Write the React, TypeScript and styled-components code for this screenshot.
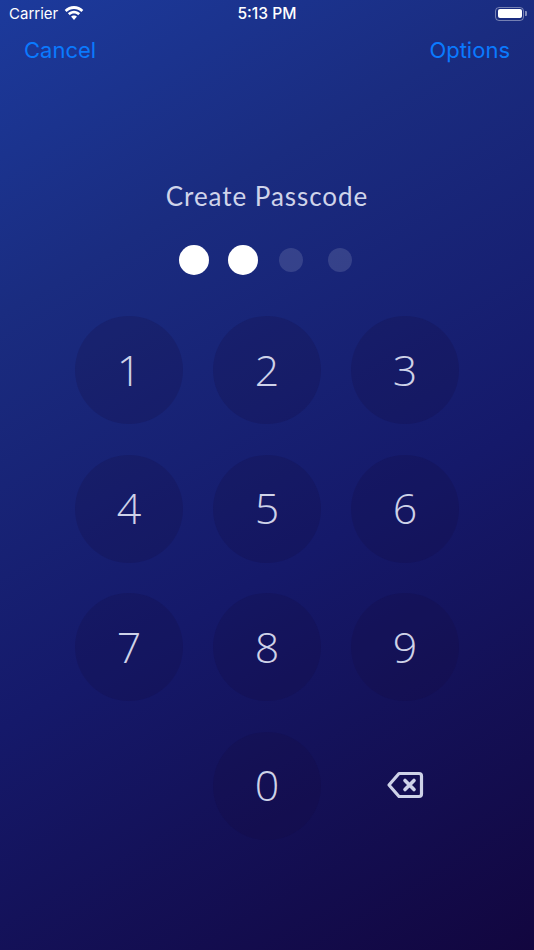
import styled, { createGlobalStyle } from "styled-components";

const GlobalStyle = createGlobalStyle`
  html, body {
    margin: 0;
    padding: 0;
    background: #12063f;
  }
`;

const KEYS = ["1", "2", "3", "4", "5", "6", "7", "8", "9"];
const DOTS = [true, true, false, false];

const Screen = styled.div`
  width: 534px;
  height: 950px;
  overflow: hidden;
  display: flex;
  flex-direction: column;
  align-items: center;
  background: linear-gradient(150deg, #1c3a9c 0%, #1a2c80 25%, #15196a 58%, #12063f 100%);
`;

const StatusBar = styled.div`
  width: 100%;
  box-sizing: border-box;
  height: 27px;
  padding: 0 7px 0 9px;
  display: grid;
  grid-template-columns: 1fr auto 1fr;
  align-items: center;
  color: #fff;
  font-family: "Inter", "Liberation Sans", sans-serif;
  font-size: 15px;
`;

const Carrier = styled.div`
  display: flex;
  align-items: center;
  gap: 6px;
`;

const Clock = styled.span`
  margin-left: -2px;
  font-size: 15.6px;
  font-weight: 500;
`;

const Battery = styled.div`
  justify-self: end;
  display: flex;
  align-items: center;
  gap: 1px;
`;

const BatteryBody = styled.div`
  width: 29px;
  height: 14px;
  box-sizing: border-box;
  border: 1px solid rgba(255, 255, 255, 0.4);
  border-radius: 4px;
  padding: 1.5px;
  display: flex;

  &::after {
    content: "";
    flex: 1;
    background: #fff;
    border-radius: 2px;
  }
`;

const BatteryCap = styled.div`
  width: 2px;
  height: 5px;
  background: rgba(255, 255, 255, 0.45);
  border-radius: 0 1px 1px 0;
`;

const NavBar = styled.div`
  width: 100%;
  box-sizing: border-box;
  padding: 6px 24px 0;
  display: flex;
  justify-content: space-between;
`;

const NavButton = styled.span`
  color: #0a7aff;
  font-family: "Inter", "Liberation Sans", sans-serif;
  font-size: 22px;
  line-height: 34px;
`;

const Title = styled.h1`
  margin: 114px 0 0;
  color: #cfd4ea;
  font-family: "Lato", "Open Sans", sans-serif;
  font-size: 26px;
  font-weight: 400;
  letter-spacing: 0.95px;
  line-height: 30px;
`;

const Dots = styled.div`
  margin-top: 34px;
  height: 30px;
  display: flex;
  align-items: center;
`;

const DotSlot = styled.div`
  width: 48.67px;
  display: flex;
  justify-content: center;
`;

const Dot = styled.div<{ $filled: boolean }>`
  width: ${(p) => (p.$filled ? "30px" : "24px")};
  height: ${(p) => (p.$filled ? "30px" : "24px")};
  border-radius: 50%;
  background: ${(p) => (p.$filled ? "#fff" : "rgba(255, 255, 255, 0.13)")};
`;

const Keypad = styled.div`
  margin-top: 41px;
  display: grid;
  grid-template-columns: repeat(3, 108px);
  grid-auto-rows: 108px;
  column-gap: 30px;
  row-gap: 30.5px;
`;

const Key = styled.div`
  width: 108px;
  height: 108px;
  box-sizing: border-box;
  padding-bottom: 2px;
  border-radius: 50%;
  display: flex;
  align-items: center;
  justify-content: center;
  background: rgba(18, 12, 60, 0.2);
  color: #ced2e8;
  font-family: "Open Sans", sans-serif;
  font-size: 43px;
  font-weight: 300;
`;

const EmptyKey = styled.div``;

const DeleteKey = styled.div`
  display: flex;
  align-items: center;
  justify-content: center;
`;

const App = () => {
  return (
    <Screen>
      <GlobalStyle />
      <StatusBar>
        <Carrier>
          <span>Carrier</span>
          <svg width="20" height="15" viewBox="0 0 20 15" fill="#fff">
            <path d="M10 3.100c2.800 0 5.400 1.100 7.400 3l1.900-2C16.800 1.500 13.500 0 10 0S3.200 1.500.7 4.100l1.900 2c2-1.900 4.600-3 7.400-3z" />
            <path d="M10 7.600c1.600 0 3.100.6 4.200 1.700l1.900-2C14.500 5.700 12.300 4.800 10 4.800s-4.500.9-6.100 2.500l1.900 2C6.900 8.200 8.400 7.600 10 7.600z" />
            <path d="M10 9.400c-1.200 0-2.300.5-3 1.200l3 3.400 3-3.400c-.7-.7-1.800-1.200-3-1.200z" />
          </svg>
        </Carrier>
        <Clock>5:13 PM</Clock>
        <Battery>
          <BatteryBody />
          <BatteryCap />
        </Battery>
      </StatusBar>
      <NavBar>
        <NavButton>Cancel</NavButton>
        <NavButton>Options</NavButton>
      </NavBar>
      <Title>Create Passcode</Title>
      <Dots>
        {DOTS.map((filled, i) => (
          <DotSlot key={i}>
            <Dot $filled={filled} />
          </DotSlot>
        ))}
      </Dots>
      <Keypad>
        {KEYS.map((k) => (
          <Key key={k}>{k}</Key>
        ))}
        <EmptyKey />
        <Key>0</Key>
        <DeleteKey>
          <svg width="38" height="30" viewBox="0 0 38 30" fill="none" stroke="#ced2e8" strokeWidth="3.2" strokeLinejoin="round" strokeLinecap="round">
            <path d="M13 2.500h20a2.500 2.500 0 0 1 2.500 2.500v18a2.500 2.500 0 0 1-2.500 2.500H13L3 14z" />
            <path d="M19 9.500l9 9M28 9.500l-9 9" strokeWidth="3.600" />
          </svg>
        </DeleteKey>
      </Keypad>
    </Screen>
  );
};

export default App;
